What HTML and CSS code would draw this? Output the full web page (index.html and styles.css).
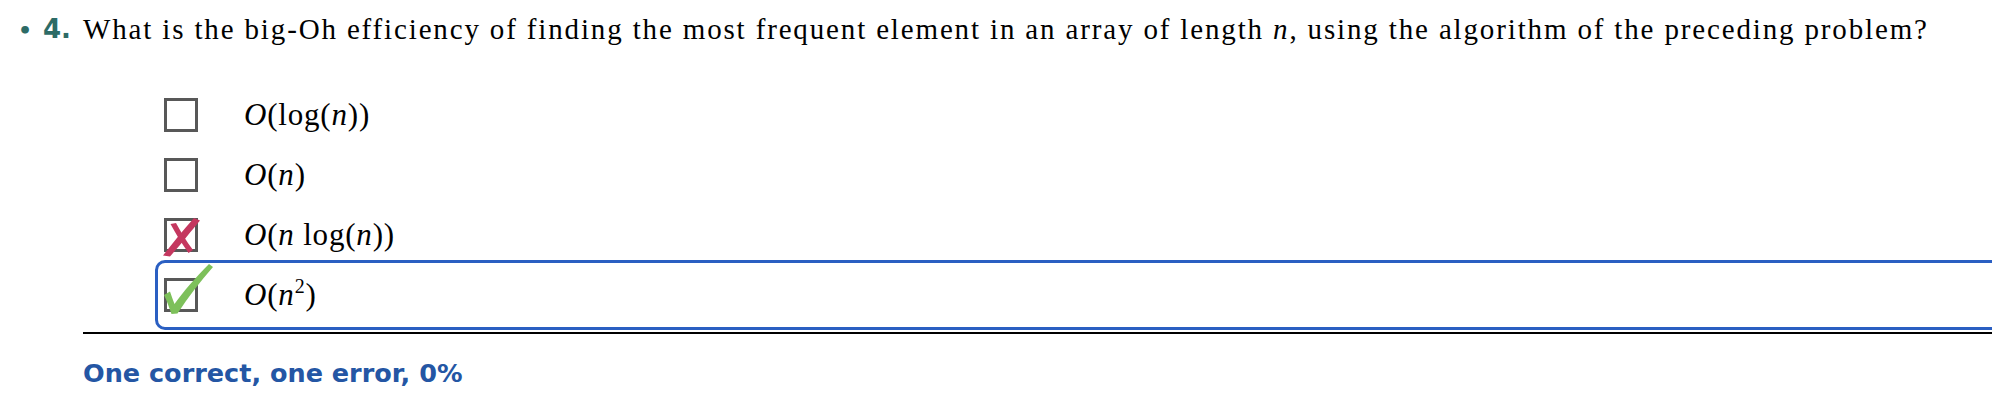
FILE: index.html
```html
<!DOCTYPE html>
<html>
<head>
<meta charset="utf-8">
<link rel="stylesheet" href="styles.css">
</head>
<body>
<div class="problem">
  <div class="marker"><span class="bullet">•</span><span class="num">4.</span></div>
  <div class="content">
    <p class="question">What is the big-Oh efficiency of finding the most frequent element in an array of length <i>n</i>, using the algorithm of the preceding problem?</p>
    <div class="options">
      <div class="opt">
        <span class="box"></span>
        <span class="math"><i>O</i>(log(<i>n</i>))</span>
      </div>
      <div class="opt">
        <span class="box"></span>
        <span class="math"><i>O</i>(<i>n</i>)</span>
      </div>
      <div class="opt">
        <span class="box">
          <svg class="mark" width="34" height="40" viewBox="0 0 34 40">
            <path d="M30 0 L36 2.5 C28 12 18 25 6 38.5 L-1 37.5 C9 25 19 12 30 0 Z" fill="#c4375f"/>
            <path d="M6.5 6 L12 5 C17 14 22 23 29 32 L24.5 35 C18 26 12 16 6.5 6 Z" fill="#c4375f"/>
          </svg>
        </span>
        <span class="math"><i>O</i>(<i>n</i> log(<i>n</i>))</span>
      </div>
      <div class="opt current">
        <span class="box">
          <svg class="mark" width="34" height="34" viewBox="0 0 34 34">
            <path d="M0 17 L6 13.5 C7.5 18 9 22 10.5 26 C19 14 31 0 45 -14 L49 -11 C36 4 24 19 13.5 35.5 L7.5 36 C5 29 3 23 0 17 Z" fill="#7dc05a"/>
          </svg>
        </span>
        <span class="math"><i>O</i>(<i>n</i><sup>2</sup>)</span>
      </div>
    </div>
    <div class="rule"></div>
    <p class="feedback">One correct, one error, 0%</p>
  </div>
</div>
</body>
</html>
```

FILE: styles.css
```css
html, body {
  margin: 0;
  padding: 0;
  overflow: hidden;
  background: #fff;
}

.problem {
  display: grid;
  grid-template-columns: 83px 1fr;
  padding-top: 13px;
}

.marker {
  display: flex;
  align-items: baseline;
  justify-content: flex-end;
  gap: 11px;
  padding-right: 12px;
  color: #2d6b66;
  font-family: "DejaVu Sans", sans-serif;
  font-weight: bold;
  font-size: 26px;
  line-height: 32px;
}

.bullet {
  font-size: 22px;
}

.content {
  margin-right: -20px;
}

.question {
  margin: 0;
  font-family: "Liberation Serif", "Times New Roman", serif;
  font-size: 29px;
  letter-spacing: 1.85px;
  line-height: 32px;
  color: #000;
  white-space: nowrap;
}

.options {
  margin-top: 40px;
  padding-left: 77px;
}

.opt {
  display: flex;
  align-items: center;
  gap: 46px;
  height: 60px;
  padding-left: 4px;
}

.opt.current {
  outline: 3.5px solid #2a5fc2;
  outline-offset: 2px;
  border-radius: 5px;
}

.box {
  position: relative;
  flex: none;
  width: 34px;
  height: 34px;
  box-sizing: border-box;
  border: 3px solid #585858;
}

.mark {
  position: absolute;
  left: -3px;
  top: -3px;
  overflow: visible;
}

.math {
  font-family: "Liberation Serif", "Times New Roman", serif;
  font-size: 31px;
  letter-spacing: 0.8px;
  line-height: 34px;
  color: #000;
}

.math sup {
  font-size: 20px;
  line-height: 0;
  vertical-align: 12px;
}

.rule {
  height: 2px;
  background: #000;
  margin-top: 7px;
}

.feedback {
  margin: 25px 0 0;
  font-family: "DejaVu Sans", sans-serif;
  font-weight: bold;
  font-size: 25.5px;
  line-height: 29px;
  color: #2456a4;
}
```
